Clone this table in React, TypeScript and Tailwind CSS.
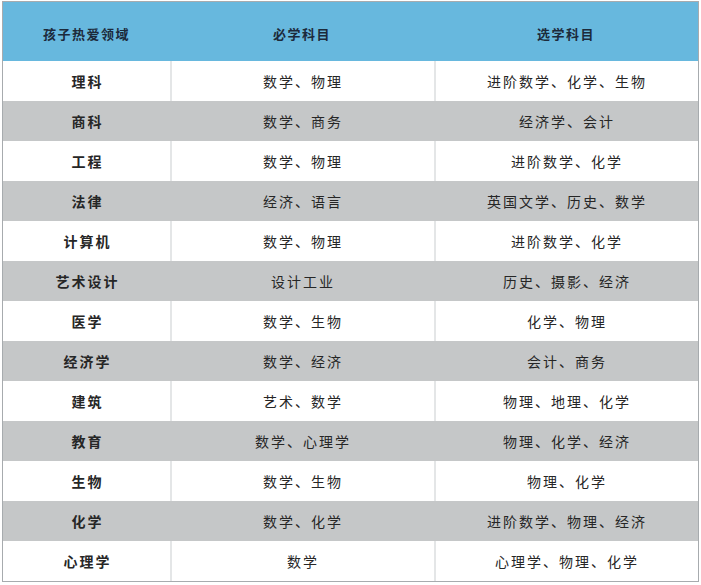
import React from "react";

const rows: [string, string, string][] = [
  ["理科", "数学、物理", "进阶数学、化学、生物"],
  ["商科", "数学、商务", "经济学、会计"],
  ["工程", "数学、物理", "进阶数学、化学"],
  ["法律", "经济、语言", "英国文学、历史、数学"],
  ["计算机", "数学、物理", "进阶数学、化学"],
  ["艺术设计", "设计工业", "历史、摄影、经济"],
  ["医学", "数学、生物", "化学、物理"],
  ["经济学", "数学、经济", "会计、商务"],
  ["建筑", "艺术、数学", "物理、地理、化学"],
  ["教育", "数学、心理学", "物理、化学、经济"],
  ["生物", "数学、生物", "物理、化学"],
  ["化学", "数学、化学", "进阶数学、物理、经济"],
  ["心理学", "数学", "心理学、物理、化学"],
];

export default function App() {
  return (
    <div
      className="w-[701px] h-[585px] bg-white pt-[1px] pl-[2px]"
      style={{ fontFamily: '"Noto Sans CJK SC", "Noto Sans", sans-serif' }}
    >
      <div className="w-[697px] border border-[#a7abae]">
        <div className="grid grid-cols-[167px_264px_264px] h-[59px] bg-[#67b8de] text-[13px] font-bold text-[#1c2a3b] tracking-[1.5px]">
          <div className="flex items-center justify-center pt-[5px]">孩子热爱领域</div>
          <div className="flex items-center justify-center pt-[5px]">必学科目</div>
          <div className="flex items-center justify-center pt-[5px]">选学科目</div>
        </div>
        {rows.map((r, i) => (
          <div
            key={i}
            className={`grid grid-cols-[167px_264px_264px] h-[40px] text-[14px] text-[#262626] ${
              i % 2 === 1 ? "bg-[#c5c7c8]" : "bg-white"
            }`}
          >
            <div className="flex items-center justify-center font-bold tracking-[2px] pl-[2px]">{r[0]}</div>
            <div
              className={`flex items-center justify-center tracking-[2px] border-l-2 ${
                i % 2 === 1 ? "border-[#c5c7c8]" : "border-[#e4e6e7]"
              }`}
            >
              {r[1]}
            </div>
            <div
              className={`flex items-center justify-center tracking-[2px] border-l-2 ${
                i % 2 === 1 ? "border-[#c5c7c8]" : "border-[#e4e6e7]"
              }`}
            >
              {r[2]}
            </div>
          </div>
        ))}
      </div>
    </div>
  );
}
